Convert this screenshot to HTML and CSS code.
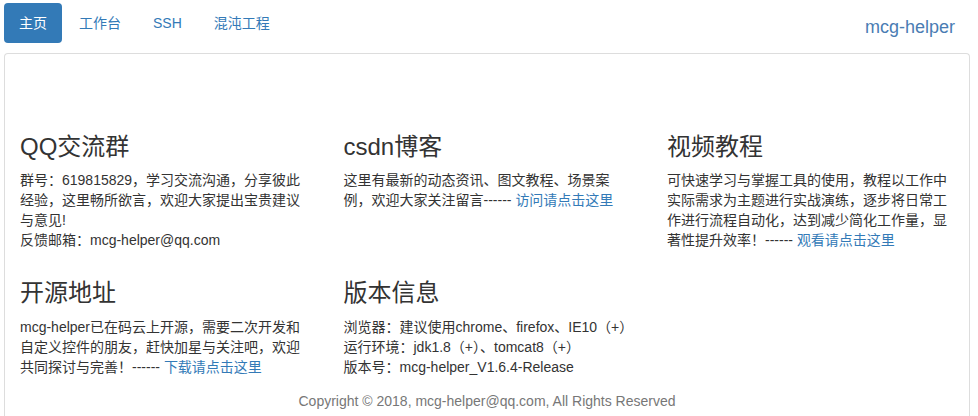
FILE: index.html
```html
<!DOCTYPE html>
<html lang="zh-CN">
<head>
<meta charset="utf-8">
<title>mcg-helper</title>
<link rel="stylesheet" href="styles.css">
</head>
<body>
<header class="topbar">
  <ul class="pills">
    <li class="pill active"><a href="#">主页</a></li>
    <li class="pill"><a href="#">工作台</a></li>
    <li class="pill"><a href="#">SSH</a></li>
    <li class="pill"><a href="#">混沌工程</a></li>
  </ul>
  <a class="brand" href="#">mcg-helper</a>
</header>
<main class="panel">
  <div class="panel-body">
    <div class="row">
      <section class="col">
        <h3>QQ交流群</h3>
        <p>群号：619815829，学习交流沟通，分享彼此经验，这里畅所欲言，欢迎大家提出宝贵建议与意见!<br>反馈邮箱：mcg-helper@qq.com</p>
      </section>
      <section class="col">
        <h3>csdn博客</h3>
        <p>这里有最新的动态资讯、图文教程、场景案例，欢迎大家关注留言------ <a href="#">访问请点击这里</a></p>
      </section>
      <section class="col">
        <h3>视频教程</h3>
        <p>可快速学习与掌握工具的使用，教程以工作中实际需求为主题进行实战演练，逐步将日常工作进行流程自动化，达到减少简化工作量，显著性提升效率！------ <a href="#">观看请点击这里</a></p>
      </section>
    </div>
    <div class="row">
      <section class="col">
        <h3>开源地址</h3>
        <p>mcg-helper已在码云上开源，需要二次开发和自定义控件的朋友，赶快加星与关注吧，欢迎共同探讨与完善！------ <a href="#">下载请点击这里</a></p>
      </section>
      <section class="col">
        <h3>版本信息</h3>
        <p>浏览器：建议使用chrome、firefox、IE10（+）<br>运行环境：jdk1.8（+）、tomcat8（+）<br>版本号：mcg-helper_V1.6.4-Release</p>
      </section>
      <section class="col"></section>
    </div>
    <footer class="footer">Copyright © 2018, mcg-helper@qq.com, All Rights Reserved</footer>
  </div>
</main>
</body>
</html>
```
FILE: styles.css
```css
* { box-sizing: border-box; }
html, body { margin: 0; padding: 0; }
body {
  font-family: "Liberation Sans", Arial, "Noto Sans CJK SC", sans-serif;
  font-size: 14px;
  line-height: 20px;
  color: #333;
  background: #fff;
}
a { color: #337ab7; text-decoration: none; }

.topbar {
  display: flex;
  justify-content: space-between;
  align-items: flex-start;
  padding: 3px 0 0 4px;
}
.pills {
  display: flex;
  list-style: none;
  margin: 0;
  padding: 0;
}
.pill + .pill { margin-left: 2px; }
.pill a {
  display: block;
  padding: 10px 15px;
  border-radius: 4px;
  line-height: 20px;
  color: #337ab7;
}
.pill.active a {
  background: #337ab7;
  color: #fff;
}
.brand {
  font-size: 18px;
  line-height: 20px;
  padding: 14px 23px 0 0;
  color: #4a7cb3;
}

.panel {
  margin: 10px 8px 0 4px;
  border: 1px solid #ddd;
  border-bottom: 0;
  border-radius: 4px 4px 0 0;
  min-height: 370px;
}
.panel-body {
  padding: 60px 0 0 0;
}
.row {
  display: grid;
  grid-template-columns: 323.5px 323.5px 1fr;
}
.col {
  padding: 0 15px;
}
.col h3 {
  margin: 20px 0 10px;
  font-size: 24px;
  font-weight: 400;
  line-height: 26.4px;
  color: #333;
}
.col p {
  margin: 0 0 10px;
}
.footer {
  margin-top: 4px;
  text-align: center;
  color: #777;
}
```
